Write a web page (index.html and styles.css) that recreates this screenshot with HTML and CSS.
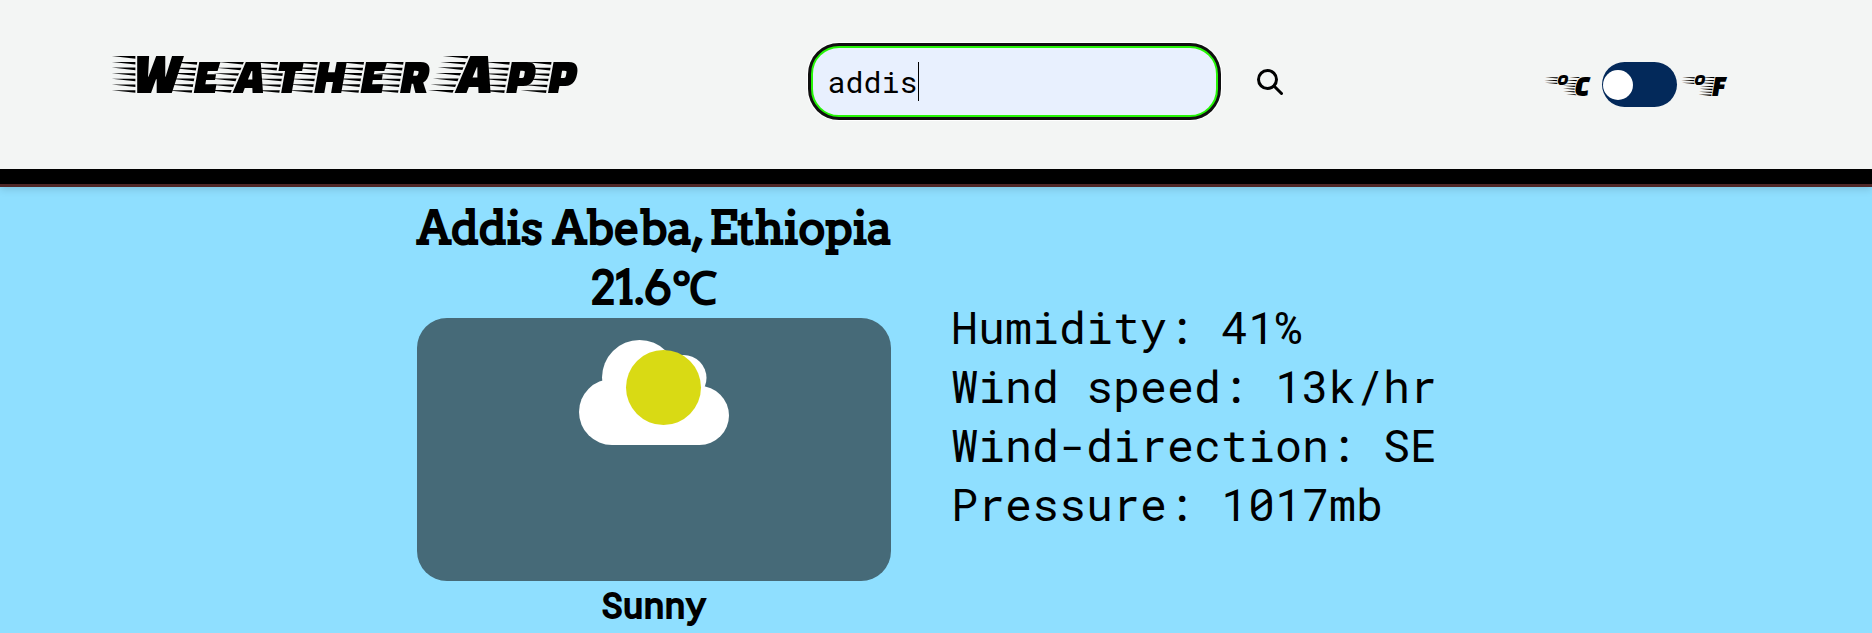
FILE: index.html
```html
<!DOCTYPE html>
<html lang="en">
<head>
<meta charset="utf-8">
<title>Weather App</title>
<link rel="stylesheet" href="styles.css">
</head>
<body>
<header class="header">
  <h1 class="brand">Weather App</h1>

  <form class="search">
    <div class="field">
      <input class="field-input" type="text" name="city" value="addis" aria-label="City">
      <span class="caret"></span>
    </div>
    <button class="search-button" type="button" aria-label="Search">
      <svg class="search-icon" viewBox="0 0 26 26" fill="none" stroke="#000" stroke-width="3" stroke-linecap="round"><circle cx="10.500" cy="10.500" r="9"/><path d="M17 17L24.500 24.500"/></svg>
    </button>
  </form>

  <label class="units">
    <span>°C</span>
    <input class="toggle" type="checkbox" role="switch" aria-label="Use Fahrenheit">
    <span>°F</span>
  </label>
</header>

<main class="weather">
  <section class="summary">
    <h2 class="place">Addis Abeba, Ethiopia</h2>
    <p class="temperature">21.6℃</p>
    <div class="sky">
      <svg class="cloud" viewBox="0 0 150 105" aria-hidden="true">
        <g fill="#fff"><circle cx="60.500" cy="37.500" r="37.500"/><circle cx="104.500" cy="38" r="23"/><circle cx="33" cy="72" r="33"/><circle cx="120.500" cy="75.500" r="29.500"/><rect x="33" y="40" width="88" height="65"/></g>
        <circle cx="84.500" cy="47.500" r="37.500" fill="#d9da14"/>
      </svg>
    </div>
    <p class="condition">Sunny</p>
  </section>
  <section class="details">
    <p>Humidity: 41%</p>
    <p>Wind speed: 13k/hr</p>
    <p>Wind-direction: SE</p>
    <p>Pressure: 1017mb</p>
  </section>
</main>
</body>
</html>
```
FILE: styles.css
```css
* {
  box-sizing: border-box;
  margin: 0;
}

body {
  background: #8fdfff;
  color: #000;
  font-family: "Roboto Mono", "DejaVu Sans Mono", monospace;
  overflow: hidden;
}

.header {
  display: flex;
  justify-content: space-between;
  align-items: center;
  height: 187px;
  padding: 0 146px 5px 122px;
  background: #f3f5f4;
  border-bottom: 3px solid #4f2727;
  box-shadow: inset 0 -15px 0 #000, 0 2px 8px rgba(0, 0, 0, 0.15);
}

.brand {
  font: 400 60px/72px "Faster One", Roboto, sans-serif;
  margin-bottom: 38px;
}

.search {
  display: flex;
  align-items: center;
  gap: 31px;
  margin: 0 28px 16px 0;
}

.field {
  position: relative;
}

.field-input {
  display: block;
  width: 407px;
  height: 71px;
  padding: 0 15px;
  border: 2px solid #26f507;
  border-radius: 28px;
  background: #e8f0fe;
  box-shadow: 0 0 0 3px #101010, 0 0 0 4px #fff;
  color: #000;
  font: 30px/39px "Roboto Mono", "DejaVu Sans Mono", monospace;
  outline: none;
}

.caret {
  position: absolute;
  left: 107px;
  top: 16px;
  width: 1px;
  height: 39px;
  background: #000;
}

.search-button {
  display: flex;
  padding: 8px;
  border: 0;
  background: none;
}

.search-icon {
  width: 26px;
  height: 26px;
}

.units {
  display: flex;
  align-items: center;
  gap: 12px;
  margin-bottom: 10px;
  font: 30px/36px "Faster One", Roboto, sans-serif;
}

.toggle {
  appearance: none;
  width: 75px;
  height: 45px;
  border-radius: 23px;
  background: #03295a;
  padding: 0 1px;
  display: flex;
  align-items: center;
}

.toggle::before {
  content: "";
  width: 30px;
  height: 30px;
  border-radius: 50%;
  background: #fff;
}

.weather {
  display: flex;
  justify-content: center;
  align-items: center;
  gap: 60px;
  padding-top: 11px;
}

.summary {
  width: 474px;
  text-align: center;
}

.place,
.temperature {
  font: 400 45px/60px Arvo, serif;
  -webkit-text-stroke: 2px #000;
  white-space: nowrap;
}

.sky {
  height: 263px;
  padding-top: 22px;
  border-radius: 30px;
  background: #466a78;
}

.cloud {
  width: 150px;
  height: 105px;
}

.condition {
  padding-bottom: 4px;
  font: 400 35px/46px "Roboto Mono", monospace;
  -webkit-text-stroke: 2px #000;
}

.details {
  width: 504px;
  font-size: 45px;
  line-height: 59px;
}
```
